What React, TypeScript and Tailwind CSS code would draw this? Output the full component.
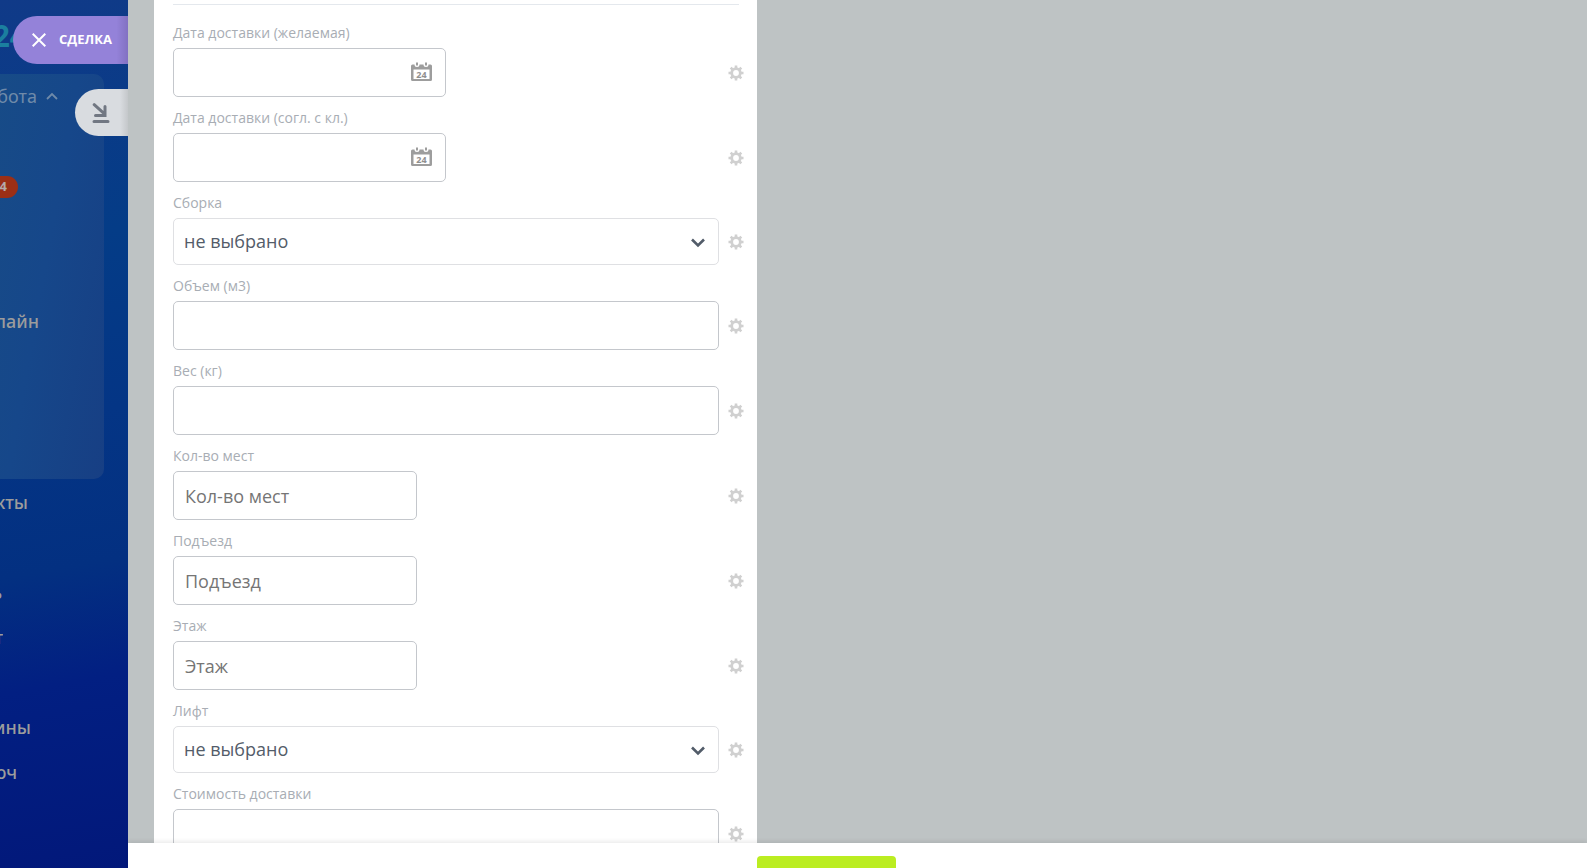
import React from 'react';

interface Field {
    id: string;
    label: string;
    type: 'date' | 'select' | 'text' | 'number';
}

const fields: Field[] = [
    { id: 'date-wanted', label: 'Дата доставки (желаемая)', type: 'date' },
    { id: 'date-agreed', label: 'Дата доставки (согл. с кл.)', type: 'date' },
    { id: 'assembly', label: 'Сборка', type: 'select' },
    { id: 'volume', label: 'Объем (м3)', type: 'text' },
    { id: 'weight', label: 'Вес (кг)', type: 'text' },
    { id: 'places', label: 'Кол-во мест', type: 'number' },
    { id: 'entrance', label: 'Подъезд', type: 'number' },
    { id: 'floor', label: 'Этаж', type: 'number' },
    { id: 'lift', label: 'Лифт', type: 'select' },
    { id: 'delivery-price', label: 'Стоимость доставки', type: 'text' },
];

const GearIcon: React.FC = () => (
    <svg width="16" height="16" viewBox="0 0 16 16" fill="none" stroke="#d0d0d0">
        <circle cx="8" cy="8" r="4.3" strokeWidth="2.8" />
        <path
            d="M8 .5v2.500M8 13v2.500M.5 8H3M13 8h2.500M2.700 2.700l1.800 1.800M11.500 11.500l1.800 1.800M2.700 13.300l1.800-1.800M11.500 4.500l1.800-1.800"
            strokeWidth="2.6"
        />
    </svg>
);

const CalendarIcon: React.FC = () => (
    <svg width="21" height="20" viewBox="0 0 21 20">
        <path
            fill="#9d9d9d"
            fillRule="evenodd"
            d="M1.5 2.5H3.500a2.500 2.500 0 0 0 5 0h4a2.500 2.500 0 0 0 5 0h2A1.500 1.500 0 0 1 21 4v13.500a1.500 1.500 0 0 1-1.500 1.500h-18A1.500 1.500 0 0 1 0 17.500V4a1.500 1.500 0 0 1 1.500-1.500zM2.500 7.500V17h16V7.500z"
        />
        <path d="M6 .5v3M15 .5v3" stroke="#9d9d9d" strokeWidth="2" />
        <text x="10.500" y="15.500" textAnchor="middle" fill="#8f8f8f" fontSize="9" fontWeight="700" fontFamily="Noto Sans, sans-serif">24</text>
    </svg>
);

const FieldControl: React.FC<{ field: Field }> = ({ field }) => {
    const base = 'block h-[49px] rounded-[5px] border border-[#c4c7cc] bg-white px-[11px] text-[18px] text-[#535c69] outline-none';

    if (field.type === 'select') {
        return (
            <div className="relative">
                <select
                    id={field.id}
                    className="block h-[47px] w-full appearance-none rounded-[5px] border border-[#dfe0e3] bg-white px-[10px] text-[18px] text-[#535c69] outline-none"
                >
                    <option>не выбрано</option>
                </select>
                <svg className="pointer-events-none absolute top-5 right-[14px]" width="14" height="10" viewBox="0 0 14 10" fill="none" stroke="#525c69" strokeWidth="2.600">
                    <path d="M1 1.500l6 6 6-6" />
                </svg>
            </div>
        );
    }
    if (field.type === 'date') {
        return (
            <div className="relative w-1/2">
                <input id={field.id} type="text" className={`${base} w-full`} />
                <button type="button" aria-label="Календарь" className="absolute top-[14px] right-[14px]">
                    <CalendarIcon />
                </button>
            </div>
        );
    }
    if (field.type === 'number') {
        return <input id={field.id} type="text" placeholder={field.label} className={`${base} w-[244px] placeholder:text-[#757575]`} />;
    }
    return <input id={field.id} type="text" className={`${base} w-full`} />;
};

const FieldRow: React.FC<{ field: Field }> = ({ field }) => (
    <div className="pt-[10px]">
        <label htmlFor={field.id} className="mb-1 block text-[14px] leading-[22px] text-[#a8adb4]">
            {field.label}
        </label>
        <div className="flex items-center gap-[9px]">
            <div className="grow">
                <FieldControl field={field} />
            </div>
            <button type="button" aria-label="Настройки поля" className="shrink-0">
                <GearIcon />
            </button>
        </div>
    </div>
);

const navLink = 'flex h-[45px] items-center justify-end overflow-hidden whitespace-nowrap';

const Sidebar: React.FC = () => (
    <nav className="flex w-32 shrink-0 flex-col overflow-hidden bg-[linear-gradient(170deg,#103a88_0%,#043c87_28%,#043585_48%,#033081_65%,#021f82_78%,#02187a_100%)] font-['Noto_Sans','Open_Sans',sans-serif] text-[18px] font-medium text-[#9c9c9c]">
        <div className="flex h-[74px] w-[27px] items-center justify-end pb-1 text-[30px] font-bold text-[#1b7f9f]">24</div>
        <div className="h-[405px] w-[104px] rounded-r-[10px] bg-[linear-gradient(100deg,#174b87_0%,#16478a_45%,#173f84_100%)]">
            <button type="button" className="flex h-11 w-[58px] items-center justify-end gap-[9px] font-normal text-[#6f8aa9]">
                бота
                <svg className="shrink-0" width="12" height="8" viewBox="0 0 12 8" fill="none" stroke="currentColor" strokeWidth="1.800">
                    <path d="M1 7l5-5 5 5" />
                </svg>
            </button>
            <div className="mt-[46px] flex h-[45px] w-[18px] items-center">
                <span className="flex h-[22px] w-full items-center justify-end rounded-r-full bg-[#9b2f16] pr-[11px] text-[13px] font-bold text-[#b5aaaa]">4</span>
            </div>
            <a href="#online" className={`${navLink} mt-[90px] w-[39px]`}>лайн</a>
        </div>
        <a href="#contacts" className={`${navLink} mt-px w-[28px]`}>кты</a>
        <a href="#activity" className={`${navLink} mt-[45px] w-[2px]`}>ь</a>
        <a href="#product" className={`${navLink} w-[3px]`}>т</a>
        <a href="#shops" className={`${navLink} mt-[45px] w-[31px]`}>ины</a>
        <a href="#key" className={`${navLink} w-[17px]`}>юч</a>
    </nav>
);

const App: React.FC = () => {
    return (
        <div className="relative flex h-screen overflow-hidden font-['Open_Sans','Noto_Sans',sans-serif]">
            <Sidebar />

            {/* slider labels hang over the left menu */}
            <div className="absolute top-4 left-0 flex w-32 flex-col items-end gap-[25px]">
                <button type="button" className="flex h-12 w-[115px] items-center gap-[13px] rounded-l-full bg-[linear-gradient(90deg,#9482d9_90%,#8271c2_100%)] pl-[19px] text-[13px] font-bold text-white">
                    <svg width="14" height="14" viewBox="0 0 14 14" stroke="currentColor" strokeWidth="2">
                        <path d="M.7.7l12.600 12.600M13.300.7L.7 13.300" />
                    </svg>
                    СДЕЛКА
                </button>
                <button type="button" aria-label="Свернуть" className="flex h-[47px] w-[53px] items-center rounded-l-full bg-[linear-gradient(90deg,#d9dce0_85%,#c4c7ca_100%)] pl-[17px]">
                    <svg width="18" height="20" viewBox="0 0 18 20" fill="none" stroke="#717782" strokeWidth="3" strokeLinecap="round">
                        <path d="M2.200 1.700l10 9M13 3.500v9H3.500M2 18.500h14" />
                    </svg>
                </button>
            </div>

            <div className="flex min-w-0 grow flex-col bg-[#bec3c4]">
                <main className="min-h-0 grow overflow-hidden pl-[26px]">
                    <form className="w-[calc(42%+1px)] min-w-[500px] bg-white px-[13px] pl-[19px]">
                        <div className="mr-[5px] h-[5px] border-b border-[#e4e8ed]" />
                        <div className="pt-[7px]">
                            {fields.map((field) => (
                                <FieldRow key={field.id} field={field} />
                            ))}
                        </div>
                    </form>
                </main>
                <footer className="z-10 flex h-[25px] shrink-0 overflow-hidden bg-white pt-[13px] pl-[calc(43%+2px)] shadow-[0_-2px_4px_rgba(0,0,0,0.08)]">
                    <button type="button" aria-label="Сохранить" className="h-[39px] w-[139px] shrink-0 rounded-[4px] bg-[#bbed21]" />
                </footer>
            </div>
        </div>
    );
};

export default App;
